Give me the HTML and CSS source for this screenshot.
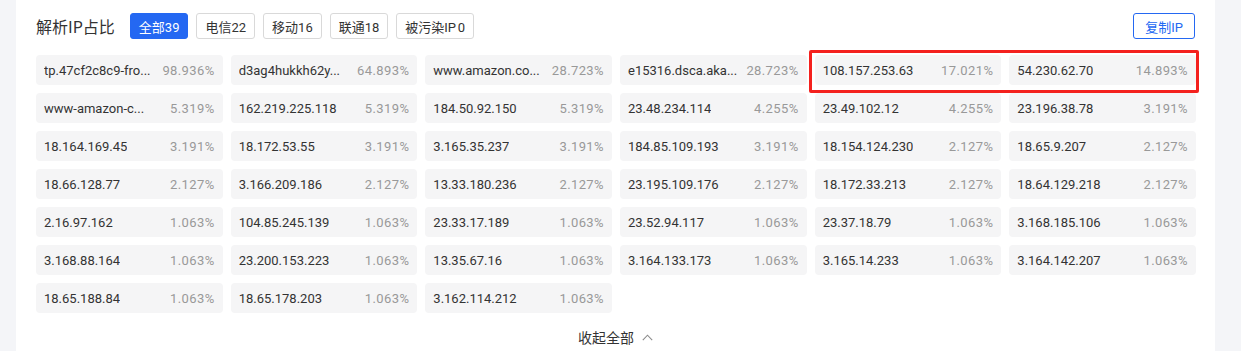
FILE: index.html
```html
<!DOCTYPE html>
<html lang="zh-CN">
<head>
<meta charset="utf-8">
<title>解析IP占比</title>
<link rel="stylesheet" href="styles.css">
</head>
<body>
<div class="card">
  <div class="header">
    <div class="header-left">
      <h2 class="title">解析IP占比</h2>
      <div class="tabs">
        <span class="tab active">全部39</span>
        <span class="tab">电信22</span>
        <span class="tab">移动16</span>
        <span class="tab">联通18</span>
        <span class="tab tight">被污染IP 0</span>
      </div>
    </div>
    <span class="copy-btn">复制IP</span>
  </div>
  <div class="grid-wrap">
    <div class="grid">
      <div class="cell"><span class="name">tp.47cf2c8c9-fro...</span><span class="pct">98.936%</span></div>
      <div class="cell"><span class="name">d3ag4hukkh62y...</span><span class="pct">64.893%</span></div>
      <div class="cell"><span class="name">www.amazon.co...</span><span class="pct">28.723%</span></div>
      <div class="cell"><span class="name">e15316.dsca.aka...</span><span class="pct">28.723%</span></div>
      <div class="cell"><span class="name">108.157.253.63</span><span class="pct">17.021%</span></div>
      <div class="cell"><span class="name">54.230.62.70</span><span class="pct">14.893%</span></div>

      <div class="cell"><span class="name">www-amazon-c...</span><span class="pct">5.319%</span></div>
      <div class="cell"><span class="name">162.219.225.118</span><span class="pct">5.319%</span></div>
      <div class="cell"><span class="name">184.50.92.150</span><span class="pct">5.319%</span></div>
      <div class="cell"><span class="name">23.48.234.114</span><span class="pct">4.255%</span></div>
      <div class="cell"><span class="name">23.49.102.12</span><span class="pct">4.255%</span></div>
      <div class="cell"><span class="name">23.196.38.78</span><span class="pct">3.191%</span></div>

      <div class="cell"><span class="name">18.164.169.45</span><span class="pct">3.191%</span></div>
      <div class="cell"><span class="name">18.172.53.55</span><span class="pct">3.191%</span></div>
      <div class="cell"><span class="name">3.165.35.237</span><span class="pct">3.191%</span></div>
      <div class="cell"><span class="name">184.85.109.193</span><span class="pct">3.191%</span></div>
      <div class="cell"><span class="name">18.154.124.230</span><span class="pct">2.127%</span></div>
      <div class="cell"><span class="name">18.65.9.207</span><span class="pct">2.127%</span></div>

      <div class="cell"><span class="name">18.66.128.77</span><span class="pct">2.127%</span></div>
      <div class="cell"><span class="name">3.166.209.186</span><span class="pct">2.127%</span></div>
      <div class="cell"><span class="name">13.33.180.236</span><span class="pct">2.127%</span></div>
      <div class="cell"><span class="name">23.195.109.176</span><span class="pct">2.127%</span></div>
      <div class="cell"><span class="name">18.172.33.213</span><span class="pct">2.127%</span></div>
      <div class="cell"><span class="name">18.64.129.218</span><span class="pct">2.127%</span></div>

      <div class="cell"><span class="name">2.16.97.162</span><span class="pct">1.063%</span></div>
      <div class="cell"><span class="name">104.85.245.139</span><span class="pct">1.063%</span></div>
      <div class="cell"><span class="name">23.33.17.189</span><span class="pct">1.063%</span></div>
      <div class="cell"><span class="name">23.52.94.117</span><span class="pct">1.063%</span></div>
      <div class="cell"><span class="name">23.37.18.79</span><span class="pct">1.063%</span></div>
      <div class="cell"><span class="name">3.168.185.106</span><span class="pct">1.063%</span></div>

      <div class="cell"><span class="name">3.168.88.164</span><span class="pct">1.063%</span></div>
      <div class="cell"><span class="name">23.200.153.223</span><span class="pct">1.063%</span></div>
      <div class="cell"><span class="name">13.35.67.16</span><span class="pct">1.063%</span></div>
      <div class="cell"><span class="name">3.164.133.173</span><span class="pct">1.063%</span></div>
      <div class="cell"><span class="name">3.165.14.233</span><span class="pct">1.063%</span></div>
      <div class="cell"><span class="name">3.164.142.207</span><span class="pct">1.063%</span></div>

      <div class="cell"><span class="name">18.65.188.84</span><span class="pct">1.063%</span></div>
      <div class="cell"><span class="name">18.65.178.203</span><span class="pct">1.063%</span></div>
      <div class="cell"><span class="name">3.162.114.212</span><span class="pct">1.063%</span></div>
    </div>
    <div class="highlight"></div>
  </div>
  <div class="footer">
    <span class="collapse">收起全部<svg class="chevron" width="11" height="7" viewBox="0 0 11 7"><polyline points="0.8,6.2 5.5,1.2 10.2,6.2" fill="none" stroke="#8c8c8c" stroke-width="1.1"/></svg></span>
  </div>
</div>
</body>
</html>
```
FILE: styles.css
```css
* { box-sizing: border-box; }
html, body { margin: 0; padding: 0; }
body {
  background: #f4f5f8;
  font-family: Roboto, "Noto Sans CJK SC", sans-serif;
  color: #333;
  height: 351px;
  overflow: hidden;
}
.card {
  margin-left: 16px;
  width: 1199px;
  height: 351px;
  background: #fff;
  padding: 13px 20px 0 20px;
}
.header {
  display: flex;
  align-items: center;
  justify-content: space-between;
  height: 26px;
}
.header-left {
  display: flex;
  align-items: center;
}
.title {
  margin: 0 15px 0 0;
  font-family: "Noto Sans CJK SC", sans-serif;
  font-size: 16px;
  font-weight: 400;
  color: #333;
  line-height: 26px;
}
.tabs {
  display: flex;
  gap: 8px;
}
.tab {
  display: inline-flex;
  align-items: center;
  height: 26px;
  padding: 0 8px;
  border: 1px solid #d9d9d9;
  border-radius: 3px;
  font-size: 13px;
  color: #333;
  background: #fff;
}
.tab.tight { word-spacing: -1.5px; }
.tab.active {
  background: #2468f2;
  border-color: #2468f2;
  color: #fff;
}
.copy-btn {
  display: inline-flex;
  align-items: center;
  height: 26px;
  padding: 0 11px;
  border: 1px solid #2468f2;
  border-radius: 3px;
  color: #2468f2;
  font-size: 13px;
}
.grid-wrap {
  position: relative;
  margin-top: 16px;
  width: 1160px;
}
.grid {
  display: grid;
  grid-template-columns: repeat(6, minmax(0, 1fr));
  grid-auto-rows: 30px;
  gap: 8px;
}
.cell {
  display: flex;
  align-items: center;
  justify-content: space-between;
  gap: 6px;
  padding: 0 8px;
  background: #f5f5f6;
  border-radius: 4px;
  font-size: 13px;
  white-space: nowrap;
  min-width: 0;
}
.name {
  color: #333;
  overflow: hidden;
  min-width: 0;
}
.pct {
  color: #999;
  flex-shrink: 0;
  letter-spacing: 0.4px;
}
.highlight {
  position: absolute;
  left: 773px;
  top: -5px;
  width: 390px;
  height: 43px;
  border: 3px solid #f4211e;
  border-radius: 2px;
  pointer-events: none;
}
.footer {
  display: flex;
  justify-content: center;
  padding-top: 14px;
}
.collapse {
  display: inline-flex;
  align-items: center;
  gap: 8px;
  font-family: "Noto Sans CJK SC", sans-serif;
  font-size: 14px;
  color: #333;
  line-height: 20px;
}
.chevron { display: block; }
```
